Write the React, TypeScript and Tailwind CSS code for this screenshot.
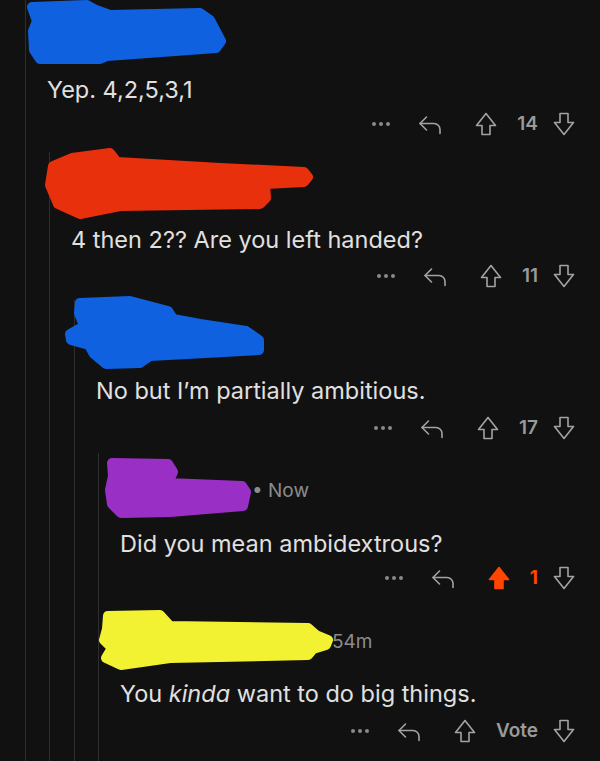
import React from "react";

type Act = { count: string; voted?: boolean };

const scribbles: { color: string; points: string }[] = [
  {
    color: "#1061e0",
    points:
      "32,7 87,5 96,10 110,15 200,13 210,20 221,41 216,48 107,56 100,59 40,59 34,50 33,31 37,21",
  },
  {
    color: "#e8300c",
    points:
      "53,166 72,158 110,153 117,162 220,168 304,172 308,177 304,182 265,184 266,198 260,204 120,206 80,214 58,204 50,185",
  },
  {
    color: "#1061e0",
    points:
      "80,303 130,301 168,311 173,319 200,324 246,331 259,340 259,350 150,356 140,363 106,364 94,354 89,345 71,340 70,334 84,326 79,313",
  },
  {
    color: "#9a2fc6",
    points: "112,463 168,464 173,472 168,483 242,486 246,492 243,506 170,512 121,513 112,504 110,490 113,476",
  },
  {
    color: "#f2f233",
    points:
      "108,616 160,615 170,626 308,628 316,635 328,640 326,645 313,649 308,655 170,658 121,665 106,658 112,648 104,640 107,629",
  },
];

function UpArrow({ filled }: { filled?: boolean }) {
  return (
    <svg width="22" height="24" viewBox="0 0 22 24" className="shrink-0">
      <path
        d="M7 22.5v-9H1.5L11 1.5l9.5 12H15v9H7z"
        fill={filled ? "#ff4500" : "none"}
        stroke={filled ? "#ff4500" : "#a3a3a3"}
        strokeWidth="1.6"
        strokeLinejoin="round"
      />
    </svg>
  );
}

function DownArrow() {
  return (
    <svg width="22" height="24" viewBox="0 0 22 24" className="shrink-0">
      <path
        d="M7 1.5v9H1.5L11 22.5l9.5-12H15v-9H7z"
        fill="none"
        stroke="#a3a3a3"
        strokeWidth="1.6"
        strokeLinejoin="round"
      />
    </svg>
  );
}

function ReplyIcon() {
  return (
    <svg
      width="24"
      height="22"
      viewBox="0 0 24 22"
      className="shrink-0"
      fill="none"
      stroke="#a3a3a3"
      strokeWidth="1.6"
      strokeLinecap="round"
      strokeLinejoin="round"
    >
      <path d="M22 20.5v-4a6 6 0 0 0-6-6H2" />
      <path d="M8.5 17 2 10.5 8.5 4" />
    </svg>
  );
}

function Actions({ count, voted }: Act) {
  return (
    <div className="flex h-[36px] items-center justify-end pr-[25px]">
      <div className="flex gap-[3px]">
        <span className="h-[4px] w-[4px] rounded-full bg-[#8a8a8a]" />
        <span className="h-[4px] w-[4px] rounded-full bg-[#8a8a8a]" />
        <span className="h-[4px] w-[4px] rounded-full bg-[#8a8a8a]" />
      </div>
      <div className="ml-[28px]">
        <ReplyIcon />
      </div>
      <div className="ml-[33px]">
        <UpArrow filled={voted} />
      </div>
      <span
        className={
          voted
            ? "ml-[20px] text-[19px] font-bold text-[#ff4500]"
            : "ml-[20px] text-[19px] font-semibold text-[#9a9a9a]"
        }
      >
        {count}
      </span>
      <div className="ml-[15px]">
        <DownArrow />
      </div>
    </div>
  );
}

function Comment({
  header,
  meta,
  metaPad,
  children,
  act,
  mt,
  pb,
}: {
  header: number;
  meta?: string;
  metaPad?: number;
  children: React.ReactNode;
  act: Act;
  mt: number;
  pb: number;
}) {
  return (
    <div style={{ paddingBottom: pb }}>
      <div className="flex items-center" style={{ height: header, paddingLeft: metaPad }}>
        {meta && <span className="text-[19px] text-[#8c8c8c]">{meta}</span>}
      </div>
      <p className="h-[28px] whitespace-nowrap pl-[21px] text-[23.5px] leading-[28px] text-[#e0e0e0]">
        {children}
      </p>
      <div style={{ marginTop: mt }}>
        <Actions {...act} />
      </div>
    </div>
  );
}

export default function App() {
  return (
    <div className="relative h-[761px] w-[600px] overflow-hidden bg-[#111111] pl-[25px] font-['Inter','Liberation_Sans',sans-serif]">
      <div className="h-full border-l border-[#2e2e2e]">
        <Comment header={76} act={{ count: "14" }} mt={2} pb={10}>
          Yep. 4,2,5,3,1
        </Comment>
        <div className="ml-[23px] border-l border-[#2e2e2e]">
          <Comment header={74} act={{ count: "11" }} mt={4} pb={6}>
            4 then 2?? Are you left handed?
          </Comment>
          <div className="ml-[24px] border-l border-[#2e2e2e]">
            <Comment header={77} act={{ count: "17" }} mt={5} pb={7}>
              No but I’m partially ambitious.
            </Comment>
            <div className="ml-[23px] border-l border-[#2e2e2e]">
              <Comment header={77} meta="• Now" metaPad={153} act={{ count: "1", voted: true }} mt={2} pb={9}>
                Did you mean ambidextrous?
              </Comment>
              <Comment header={75} meta="54m" metaPad={233} act={{ count: "Vote" }} mt={5} pb={12}>
                You <em>kinda</em> want to do big things.
              </Comment>
            </div>
          </div>
        </div>
      </div>
      <svg className="pointer-events-none absolute left-0 top-0" width="600" height="761">
        {scribbles.map((s, i) => (
          <polygon
            key={i}
            points={s.points}
            fill={s.color}
            stroke={s.color}
            strokeWidth="10"
            strokeLinejoin="round"
          />
        ))}
      </svg>
    </div>
  );
}
